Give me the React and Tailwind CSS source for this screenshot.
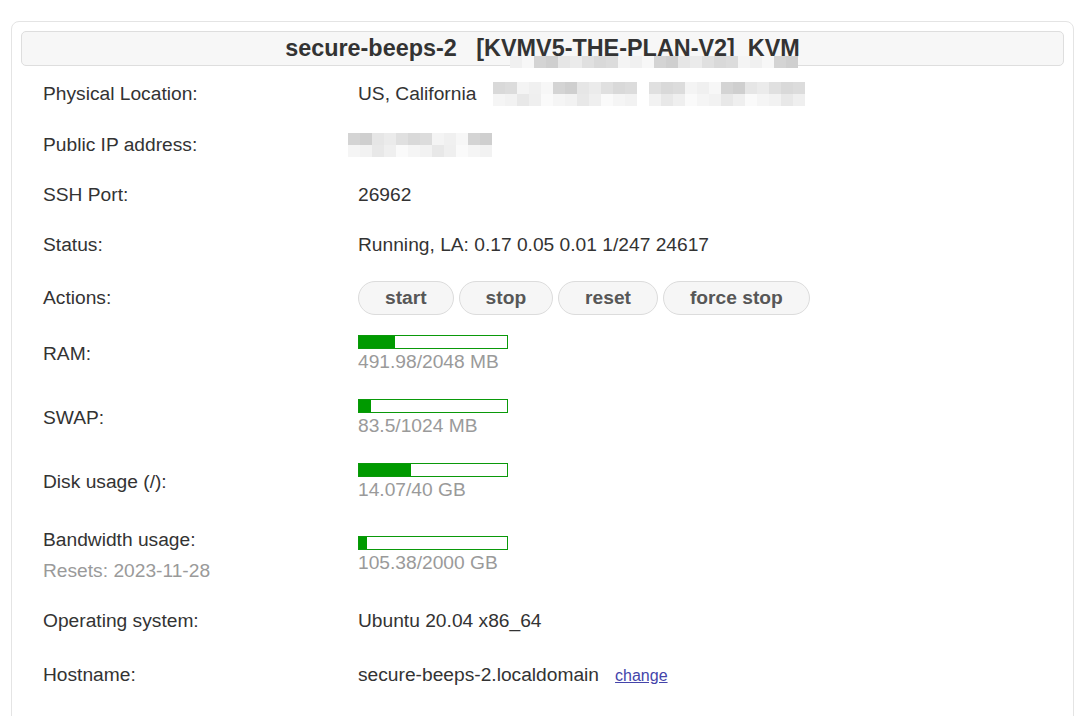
import React from 'react';

const font = { fontFamily: '"Liberation Sans", Arial, sans-serif' };

// grey pixel-mosaic that hides private bits of the screenshot
const shades = ['#e6e6e6', '#d9d9d9', '#f0f0f0', '#cfcfcf', '#e0e0e0', '#f4f4f4', '#d4d4d4', '#ebebeb', '#dcdcdc', '#f7f7f7'];
const Mosaic = ({ cols, rows = 2, cell = 12, seed = 0 }) => (
  <div className="inline-flex flex-col align-middle">
    {Array.from({ length: rows }).map((_, r) => (
      <div key={r} className="flex">
        {Array.from({ length: cols }).map((_, c) => {
          let s = shades[(c * 7 + r * 3 + seed) % shades.length];
          if (r === 1) s = ['#efefef', '#f5f5f5', '#e8e8e8', '#fafafa', '#f2f2f2'][(c * 3 + seed) % 5];
          return <div key={c} style={{ width: cell, height: cell, background: s }} />;
        })}
      </div>
    ))}
  </div>
);

const Usage = ({ used, total, unit }) => {
  const pct = Math.min(100, (used / total) * 100);
  return (
    <div className="flex flex-col">
      <div className="w-[150px] h-[14px] border border-[#0a990a] bg-white">
        <div className="h-full bg-[#009a00]" style={{ width: `${pct}%` }} />
      </div>
      <span className="mt-[2px] text-[#9a9a9a] leading-[22px]">{used}/{total} {unit}</span>
    </div>
  );
};

const Row = ({ label, sub, h, children }) => (
  <div className="flex items-center" style={{ height: h }}>
    <div className="w-[315px] shrink-0">
      <div className="leading-[22px]">{label}</div>
      {sub && <div className="mt-[9px] leading-[22px] text-[#9a9a9a]">{sub}</div>}
    </div>
    <div className="flex-1 leading-[22px]">{children}</div>
  </div>
);

const ActionBtn = ({ children }) => (
  <button className="h-[34px] min-w-[94px] px-[26px] rounded-full border border-[#dcdcdc] bg-[#f6f6f6] text-[#575757] font-bold leading-none">
    {children}
  </button>
);

export default function App() {
  return (
    <div className="min-h-screen bg-white pt-[21px] pl-[11px] pr-[10px] text-[19.2px] text-[#333]" style={font}>
      <div className="relative h-[720px] border border-[#e4e4e4] rounded-[8px] p-[9px]">
        <div className="h-[35px] flex items-center justify-center bg-[#f7f7f7] border border-[#dedede] rounded-[5px]">
          <h1 className="text-[23.4px] font-bold text-[#333] whitespace-pre leading-none">
            {'secure-beeps-2   [KVMV5-THE-PLAN-V2]  KVM'}
          </h1>
        </div>

        {/* redaction over the title */}
        <div className="absolute left-[486px] top-[34px] flex flex-col">
          <div className="flex">
            <div className="w-[12px]" />
            <Mosaic cols={24} rows={1} cell={12} seed={2} />
          </div>
          <div className="h-[6px] w-[318px] bg-white" />
        </div>

        <div className="mt-[3px] pl-[22px]">
          <Row label="Physical Location:" h={50}>
            <div className="flex items-center">
              <span>US, California</span>
              <span className="ml-[17px] flex gap-[12px]">
                <Mosaic cols={12} seed={1} />
                <Mosaic cols={13} seed={4} />
              </span>
            </div>
          </Row>
          <Row label="Public IP address:" h={51}>
            <div className="-ml-[10px] flex">
              <Mosaic cols={12} seed={6} />
            </div>
          </Row>
          <Row label="SSH Port:" h={50}>26962</Row>
          <Row label="Status:" h={50}>Running, LA: 0.17 0.05 0.01 1/247 24617</Row>
          <Row label="Actions:" h={55}>
            <div className="flex gap-[5px]">
              <ActionBtn>start</ActionBtn>
              <ActionBtn>stop</ActionBtn>
              <ActionBtn>reset</ActionBtn>
              <ActionBtn>force stop</ActionBtn>
            </div>
          </Row>
          <Row label="RAM:" h={58}>
            <Usage used={491.98} total={2048} unit="MB" />
          </Row>
          <Row label="SWAP:" h={70}>
            <Usage used={83.5} total={1024} unit="MB" />
          </Row>
          <Row label="Disk usage (/):" h={58}>
            <Usage used={14.07} total={40} unit="GB" />
          </Row>
          <Row label="Bandwidth usage:" sub="Resets: 2023-11-28" h={88}>
            <Usage used={105.38} total={2000} unit="GB" />
          </Row>
          <Row label="Operating system:" h={44}>Ubuntu 20.04 x86_64</Row>
          <Row label="Hostname:" h={64}>
            <span>secure-beeps-2.localdomain</span>
            <a href="#" className="ml-[16px] text-[16px] text-[#4444aa] underline">change</a>
          </Row>
        </div>
      </div>
    </div>
  );
}
